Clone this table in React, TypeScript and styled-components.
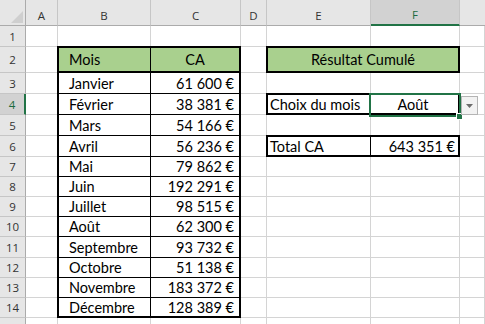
import React from "react";
import styled, { createGlobalStyle } from "styled-components";

const GlobalStyle = createGlobalStyle`
  *, *::before, *::after {
    box-sizing: border-box;
  }
  html, body {
    margin: 0;
    padding: 0;
    background: #ffffff;
  }
  body {
    font-family: Lato, "Liberation Sans", sans-serif;
  }
`;

// widths of the row-header column, then A..F (each includes its right gridline)
const COLUMN_WIDTHS = [26, 32, 93, 90, 26, 104, 89];
const COLUMN_LABELS = ["A", "B", "C", "D", "E", "F", ""];
// heights of sheet rows 1..15 (each includes its bottom gridline)
const ROW_HEIGHTS = [21, 26, 21, 21, 21, 21, 20, 20, 20, 20, 21, 20, 20, 20, 20];
// the last row only peeks in at the bottom edge, its number stays out of view
const LABELLED_ROWS = 14;

const MONTHS = [
  { name: "Janvier", amount: "61 600 €" },
  { name: "Février", amount: "38 381 €" },
  { name: "Mars", amount: "54 166 €" },
  { name: "Avril", amount: "56 236 €" },
  { name: "Mai", amount: "79 862 €" },
  { name: "Juin", amount: "192 291 €" },
  { name: "Juillet", amount: "98 515 €" },
  { name: "Août", amount: "62 300 €" },
  { name: "Septembre", amount: "93 732 €" },
  { name: "Octobre", amount: "51 138 €" },
  { name: "Novembre", amount: "183 372 €" },
  { name: "Décembre", amount: "128 389 €" },
];

const SELECTED_ROW = 4;
const SELECTED_COL = "F";

const Sheet = styled.div`
  display: grid;
  grid-template-columns: ${COLUMN_WIDTHS.map((w) => `${w}px`).join(" ")} 1fr;
  grid-template-rows: 26px ${ROW_HEIGHTS.map((h) => `${h}px`).join(" ")};
  width: 485px;
  height: 324px;
  overflow: hidden;
  background: #ffffff;
`;

const Corner = styled.div`
  grid-column: 1;
  grid-row: 1;
  display: flex;
  align-items: flex-end;
  justify-content: flex-end;
  padding: 0 2px 2px 0;
  background: #e6e6e6;
  border-right: 1px solid #ababab;
  border-bottom: 1px solid #ababab;
`;

const ColHeader = styled.div<{ $col: number; $selected?: boolean; $open?: boolean }>`
  grid-column: ${(p) => p.$col};
  grid-row: 1;
  display: flex;
  align-items: center;
  justify-content: center;
  padding-top: 5px;
  font: 11.5px "Open Sans", "Liberation Sans", sans-serif;
  color: ${(p) => (p.$selected ? "#1d6b40" : "#333333")};
  background: ${(p) => (p.$selected ? "#d2d2d2" : "#e6e6e6")};
  border-right: ${(p) => (p.$open ? "none" : "1px solid #c6c6c6")};
  border-bottom: ${(p) => (p.$selected ? "2px solid #217346" : "1px solid #ababab")};
`;

const RowHeader = styled.div<{ $row: number; $selected?: boolean }>`
  grid-column: 1;
  grid-row: ${(p) => p.$row + 1};
  display: flex;
  align-items: center;
  justify-content: center;
  font: 11.5px "Open Sans", "Liberation Sans", sans-serif;
  color: ${(p) => (p.$selected ? "#1d6b40" : "#333333")};
  background: ${(p) => (p.$selected ? "#d2d2d2" : "#e6e6e6")};
  border-bottom: 1px solid #c6c6c6;
  border-right: ${(p) => (p.$selected ? "2px solid #217346" : "1px solid #ababab")};
`;

const GridCell = styled.div<{ $row: number; $col: number }>`
  grid-column: ${(p) => p.$col};
  grid-row: ${(p) => p.$row + 1};
  border-right: 1px solid #d4d4d4;
  border-bottom: 1px solid #d4d4d4;
`;

const Box = styled.div<{ $cols: string; $rows: string }>`
  grid-column: ${(p) => p.$cols};
  grid-row: ${(p) => p.$rows};
  z-index: 1;
  margin: -1px 0 0 -1px;
  border: 2px solid #000000;
  background: #ffffff;
  color: #000000;
  font-size: 14.5px;
`;

const DataTable = styled(Box)`
  display: grid;
  grid-template-columns: 92px 1fr;
  grid-template-rows: 25px ${ROW_HEIGHTS.slice(2, 13).map((h) => `${h}px`).join(" ")} 1fr;
`;

const HeadCell = styled.div<{ $center?: boolean; $divider?: boolean }>`
  display: flex;
  align-items: center;
  justify-content: ${(p) => (p.$center ? "center" : "flex-start")};
  padding: 0 0 1px ${(p) => (p.$center ? "0" : "10px")};
  background: #a9d08e;
  border-bottom: 2px solid #000000;
  border-right: ${(p) => (p.$divider ? "1px solid #000000" : "none")};
`;

const MonthCell = styled.div<{ $last?: boolean }>`
  display: flex;
  align-items: center;
  padding-left: 10px;
  border-right: 1px solid #000000;
  border-bottom: ${(p) => (p.$last ? "none" : "1px solid #000000")};
`;

const AmountCell = styled.div<{ $last?: boolean }>`
  display: flex;
  align-items: center;
  justify-content: flex-end;
  padding-right: 5px;
  border-bottom: ${(p) => (p.$last ? "none" : "1px solid #000000")};
`;

const Banner = styled(Box)`
  display: flex;
  align-items: center;
  justify-content: center;
  padding-bottom: 1px;
  background: #a9d08e;
`;

const PairBox = styled(Box)`
  display: grid;
  grid-template-columns: 103px 1fr;
`;

const LabelCell = styled.div`
  display: flex;
  align-items: center;
  padding-left: 2px;
  border-right: 1px solid #000000;
`;

const ValueCell = styled.div<{ $center?: boolean }>`
  position: relative;
  display: flex;
  align-items: center;
  justify-content: ${(p) => (p.$center ? "center" : "flex-end")};
  padding-right: 3px;
`;

const Selection = styled.span`
  position: absolute;
  top: -2px;
  left: -2px;
  right: -3px;
  bottom: -4px;
  border: 2px solid #217346;
  pointer-events: none;
`;

const FillHandle = styled.span`
  position: absolute;
  right: -4px;
  bottom: -6px;
  width: 5px;
  height: 5px;
  background: #217346;
  box-shadow: 0 0 0 1px #ffffff;
`;

const DropButton = styled.span`
  position: absolute;
  top: 1px;
  left: calc(100% + 3px);
  width: 17px;
  height: 19px;
  display: flex;
  align-items: center;
  justify-content: center;
  background: #f2f2f2;
  border: 1px solid #b4b4b4;
`;

const App = () => {
  const sheetRows = ROW_HEIGHTS.map((_, i) => i + 1);
  return (
    <>
      <GlobalStyle />
      <Sheet>
        <Corner>
          <svg width="12" height="12" viewBox="0 0 12 12">
            <polygon points="12,0 12,12 0,12" fill="#cfcfcf" />
          </svg>
        </Corner>
        {COLUMN_LABELS.map((label, i) => (
          <ColHeader
            key={`col-${i}`}
            $col={i + 2}
            $selected={label === SELECTED_COL}
            $open={label === ""}
          >
            {label}
          </ColHeader>
        ))}
        {sheetRows.map((row) => (
          <RowHeader key={`row-${row}`} $row={row} $selected={row === SELECTED_ROW}>
            {row <= LABELLED_ROWS ? row : null}
          </RowHeader>
        ))}
        {sheetRows.flatMap((row) =>
          COLUMN_LABELS.map((_, i) => (
            <GridCell key={`cell-${row}-${i}`} $row={row} $col={i + 2} />
          ))
        )}

        <DataTable $cols="3 / 5" $rows="3 / 16">
          <HeadCell $divider>Mois</HeadCell>
          <HeadCell $center>CA</HeadCell>
          {MONTHS.map((m, i) => (
            <React.Fragment key={m.name}>
              <MonthCell $last={i === MONTHS.length - 1}>{m.name}</MonthCell>
              <AmountCell $last={i === MONTHS.length - 1}>{m.amount}</AmountCell>
            </React.Fragment>
          ))}
        </DataTable>

        <Banner $cols="6 / 8" $rows="3">
          Résultat Cumulé
        </Banner>

        <PairBox $cols="6 / 8" $rows="5">
          <LabelCell>Choix du mois</LabelCell>
          <ValueCell $center>
            Août
            <Selection />
            <FillHandle />
            <DropButton>
              <svg width="7" height="4" viewBox="0 0 7 4">
                <polygon points="0,0 7,0 3.5,4" fill="#6b6b6b" />
              </svg>
            </DropButton>
          </ValueCell>
        </PairBox>

        <PairBox $cols="6 / 8" $rows="7">
          <LabelCell>Total CA</LabelCell>
          <ValueCell>643 351 €</ValueCell>
        </PairBox>
      </Sheet>
    </>
  );
};

export default App;
